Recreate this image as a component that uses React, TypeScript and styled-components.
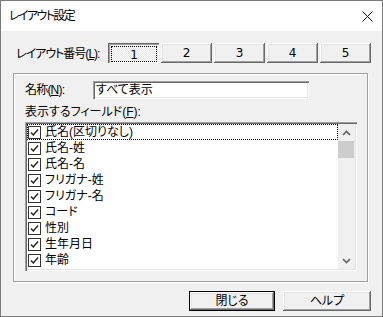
import styled, { createGlobalStyle } from 'styled-components';

const GlobalStyle = createGlobalStyle`
  html, body {
    margin: 0;
    padding: 0;
    background: #fff;
  }
`;

const fields = [
  '氏名(区切りなし)',
  '氏名-姓',
  '氏名-名',
  'フリガナ-姓',
  'フリガナ-名',
  'コード',
  '性別',
  '生年月日',
  '年齢',
];

function CheckBox() {
  return (
    <CheckSvg width="13" height="13" viewBox="0 0 13 13">
      <rect x="0.5" y="0.5" width="12" height="12" fill="#fff" stroke="#333" />
      <path d="M3 6.5 L5.3 9 L10 3.5" fill="none" stroke="#222" strokeWidth="1.4" />
    </CheckSvg>
  );
}

export default function App() {
  return (
    <>
      <GlobalStyle />
      <Window>
        <TitleBar>
          <Title>レイアウト設定</Title>
          <svg width="11" height="11" viewBox="0 0 11 11">
            <path d="M0.5 0.5 L10.5 10.5 M10.5 0.5 L0.5 10.5" stroke="#111" strokeWidth="1" />
          </svg>
        </TitleBar>
        <Body>
          <LayoutRow>
            <RowLabel>
              レイアウト番号(<u>L</u>):
            </RowLabel>
            {[1, 2, 3, 4, 5].map((n) => (
              <NumButton key={n} $pressed={n === 1}>
                {n === 1 ? <FocusRing>{n}</FocusRing> : n}
              </NumButton>
            ))}
          </LayoutRow>

          <GroupBox>
            <NameRow>
              <NameLabel>
                名称(<u>N</u>):
              </NameLabel>
              <TextInput>すべて表示</TextInput>
            </NameRow>
            <FieldLabel>
              表示するフィールド(<u>F</u>):
            </FieldLabel>
            <ListBox>
              <Rows>
                {fields.map((f, i) => (
                  <Row key={f} $focused={i === 0}>
                    <CheckBox />
                    <RowText>{f}</RowText>
                  </Row>
                ))}
              </Rows>
              <ScrollBar>
                <ArrowBox>
                  <svg width="9" height="6" viewBox="0 0 9 6">
                    <path d="M1 5 L4.5 1.5 L8 5" fill="none" stroke="#606060" strokeWidth="1.6" />
                  </svg>
                </ArrowBox>
                <Thumb />
                <Track />
                <ArrowBox>
                  <svg width="9" height="6" viewBox="0 0 9 6">
                    <path d="M1 1 L4.5 4.5 L8 1" fill="none" stroke="#606060" strokeWidth="1.6" />
                  </svg>
                </ArrowBox>
              </ScrollBar>
            </ListBox>
          </GroupBox>

          <ButtonBar>
            <DialogButton $default $width={86}>閉じる</DialogButton>
            <DialogButton $width={88}>ヘルプ</DialogButton>
          </ButtonBar>
        </Body>
      </Window>
    </>
  );
}

const Window = styled.div`
  width: 383px;
  height: 317px;
  box-sizing: border-box;
  border: 1px solid #7a7a7a;
  display: flex;
  flex-direction: column;
  font-family: 'Liberation Sans', 'Noto Sans CJK JP', sans-serif;
  font-feature-settings: 'palt';
  font-size: 12px;
  color: #000;
`;

const TitleBar = styled.div`
  height: 30px;
  background: #fff;
  display: flex;
  align-items: center;
  justify-content: space-between;
  padding: 0 9px 0 8px;
  flex-shrink: 0;
`;

const Title = styled.div`
  font-size: 12px;
  line-height: 16px;
  letter-spacing: -1.6px;
  margin-top: -1px;
`;

const Body = styled.div`
  flex: 1;
  background: #f0f0f0;
  padding: 12px 11px 0 12px;
  display: flex;
  flex-direction: column;
`;

const LayoutRow = styled.div`
  display: flex;
  align-items: center;
  gap: 2px;
  height: 20px;
`;

const RowLabel = styled.div`
  width: 93px;
  padding-left: 3px;
  box-sizing: border-box;
  line-height: 16px;
  margin-top: 2px;
  flex-shrink: 0;
  white-space: nowrap;
  letter-spacing: -1px;
`;

const NumButton = styled.div<{ $pressed?: boolean }>`
  width: 51px;
  height: 20px;
  box-sizing: border-box;
  display: flex;
  align-items: center;
  justify-content: center;
  line-height: 14px;
  font-family: 'DejaVu Sans', sans-serif;
  font-size: 12px;
  background: ${(p) =>
    p.$pressed ? 'repeating-conic-gradient(#fff 0 25%, #e6e6e6 0 50%) 0 0 / 2px 2px' : '#f0f0f0'};
  box-shadow: ${(p) =>
    p.$pressed
      ? 'inset 1px 1px #696969, inset 2px 2px #a0a0a0, inset -1px -1px #fff'
      : 'inset -1px -1px #696969, inset 1px 1px #fff, inset -2px -2px #a0a0a0, inset 2px 2px #e3e3e3'};
`;

const FocusRing = styled.div`
  flex: 1;
  align-self: stretch;
  margin: 3px 2px 1px 3px;
  border: 1px dotted #000;
  display: flex;
  align-items: center;
  justify-content: center;
  padding-top: 1px;
`;

const GroupBox = styled.div`
  margin-top: 10px;
  width: 355px;
  box-sizing: border-box;
  border: 1px solid #a0a0a0;
  box-shadow: inset 1px 1px #fff, 1px 1px #fff;
  padding: 7px 10px 10px 11px;
  display: flex;
  flex-direction: column;
`;

const NameRow = styled.div`
  display: flex;
  align-items: center;
  height: 18px;
`;

const NameLabel = styled.div`
  width: 68px;
  line-height: 16px;
  flex-shrink: 0;
  white-space: nowrap;
  letter-spacing: -0.8px;
`;

const TextInput = styled.div`
  width: 216px;
  height: 18px;
  box-sizing: border-box;
  background: #fff;
  padding: 1px 3px 0;
  line-height: 16px;
  box-shadow: inset 1px 1px #a0a0a0, inset 2px 2px #696969, inset -1px -1px #fff, inset -2px -2px #e3e3e3;
`;

const FieldLabel = styled.div`
  margin-top: 5px;
  line-height: 16px;
  height: 16px;
  white-space: nowrap;
`;

const ListBox = styled.div`
  margin-top: 2px;
  width: 332px;
  height: 149px;
  box-sizing: border-box;
  background: #fff;
  padding: 2px;
  box-shadow: inset 1px 1px #a0a0a0, inset 2px 2px #696969, inset -1px -1px #fff, inset -2px -2px #e3e3e3;
  display: flex;
`;

const Rows = styled.div`
  flex: 1;
  display: flex;
  flex-direction: column;
`;

const Row = styled.div<{ $focused?: boolean }>`
  height: 16px;
  display: flex;
  align-items: center;
  padding-left: 1px;
  white-space: nowrap;
  outline: ${(p) => (p.$focused ? '1px dotted #000' : 'none')};
  outline-offset: -1px;
`;

const CheckSvg = styled.svg`
  flex-shrink: 0;
`;

const RowText = styled.span`
  margin-left: 4px;
  line-height: 16px;
`;

const ScrollBar = styled.div`
  width: 17px;
  background: #f0f0f0;
  display: flex;
  flex-direction: column;
`;

const ArrowBox = styled.div`
  height: 17px;
  display: flex;
  align-items: center;
  justify-content: center;
`;

const Thumb = styled.div`
  height: 17px;
  margin: 0 1px 0 0;
  background: #cdcdcd;
`;

const Track = styled.div`
  flex: 1;
`;

const ButtonBar = styled.div`
  margin-top: 9px;
  display: flex;
  justify-content: flex-end;
  gap: 8px;
`;

const DialogButton = styled.div<{ $default?: boolean; $width: number }>`
  width: ${(p) => p.$width}px;
  height: 20px;
  box-sizing: border-box;
  display: flex;
  align-items: center;
  justify-content: center;
  line-height: 16px;
  background: #f0f0f0;
  border: ${(p) => (p.$default ? '1px solid #000' : 'none')};
  box-shadow: inset -1px -1px #696969, inset 1px 1px #fff, inset -2px -2px #a0a0a0, inset 2px 2px #e3e3e3;
`;
